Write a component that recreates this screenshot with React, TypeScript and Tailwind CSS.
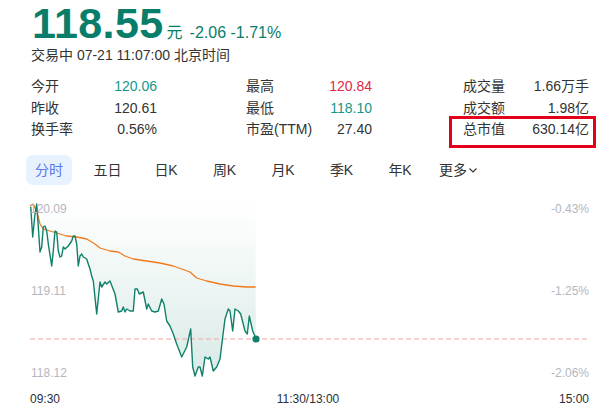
import React from 'react';

const FONT = '"Liberation Sans", Arial, "Noto Sans CJK SC", sans-serif';

const pricePts: [number, number][] = [
  [30.7, 207.7], [32.7, 238], [35, 215], [36.7, 205], [38.3, 228], [40, 253], [41.7, 248],
  [43.3, 228], [45, 227], [46.7, 232], [48.3, 245], [51.7, 267], [53.3, 252], [55, 232],
  [56.7, 233], [58.3, 252], [60, 258], [61.7, 257], [63.3, 248], [65, 250], [68.3, 247],
  [71.7, 242], [73.3, 237], [75, 237], [76.7, 245], [78.3, 267], [80, 257], [81.7, 255],
  [83.3, 258], [86.7, 260], [88.3, 265], [90, 270], [91.7, 277], [93.3, 282], [96.7, 315],
  [100, 283], [101.7, 288], [105, 283], [106.7, 285], [110, 282], [115, 295], [118.3, 313],
  [121.7, 312], [123.3, 308], [125, 313], [126.7, 310], [130, 312], [133.3, 312], [135, 290],
  [137.3, 290], [139.3, 295], [143.3, 293], [146.7, 310], [148.3, 305], [151.7, 312],
  [155, 313], [158.3, 312], [161.7, 300], [164, 305], [166.7, 322], [170, 327], [173.3, 335],
  [176.7, 345], [181.7, 358], [186.7, 348], [190.7, 330], [192.7, 368], [195, 377],
  [198.3, 368], [200, 368], [202.3, 377], [205, 358], [208.3, 360], [210, 358], [213.3, 372],
  [216.7, 368], [220, 360], [222.7, 338], [225, 320], [228.3, 310], [230, 312], [232.7, 332],
  [235, 310], [238.3, 312], [240.7, 315], [245, 332], [247.3, 335], [249.3, 317], [252.7, 332],
  [255.7, 339],
];

const avgPts: [number, number][] = [
  [30, 207], [33, 205], [36.7, 212], [40, 225], [43.3, 230], [53.3, 233], [66.7, 237],
  [76.7, 238], [86.7, 240], [95, 245], [100, 249], [110, 252], [118.3, 253], [125, 257],
  [133.3, 260], [146.7, 262], [160, 264], [173.3, 267], [181.7, 270], [190, 273], [196.7, 279],
  [206.7, 282], [220, 285], [233.3, 287], [246.7, 288], [255.7, 288],
];

const toPath = (pts: [number, number][]) =>
  pts.map(([x, y], i) => `${i ? 'L' : 'M'}${x} ${y}`).join(' ');

const stats = [
  [['今开', '120.06', 'text-[#16968a]'], ['最高', '120.84', 'text-[#e0284a]'], ['成交量', '1.66万手', 'text-[#333]']],
  [['昨收', '120.61', 'text-[#333]'], ['最低', '118.10', 'text-[#16968a]'], ['成交额', '1.98亿', 'text-[#333]']],
  [['换手率', '0.56%', 'text-[#333]'], ['市盈(TTM)', '27.40', 'text-[#333]'], ['总市值', '630.14亿', 'text-[#333]']],
];

const tabs = ['分时', '五日', '日K', '周K', '月K', '季K', '年K'];

function Chart() {
  const line = toPath(pricePts);
  const area = `${line} L255.7 203 L30.7 203 Z`;
  return (
    <div className="relative mt-[14px] h-[188px] w-full">
      <svg className="absolute inset-0" width="613" height="188" viewBox="0 200 613 188">
        <defs>
          <linearGradient id="fillG" x1="0" y1="203" x2="0" y2="378" gradientUnits="userSpaceOnUse">
            <stop offset="0" stopColor="#0f7d68" stopOpacity="0" />
            <stop offset="1" stopColor="#0f7d68" stopOpacity="0.16" />
          </linearGradient>
        </defs>
        <path d={area} fill="url(#fillG)" />
        <line x1="30" y1="340" x2="590" y2="340" stroke="#f3a4a4" strokeWidth="1.2" strokeDasharray="5 3" />
        <path d={toPath(avgPts)} fill="none" stroke="#f07a1e" strokeWidth="1.3" strokeLinejoin="round" />
        <path d={line} fill="none" stroke="#10806a" strokeWidth="1.4" strokeLinejoin="round" />
        <circle cx="256" cy="340" r="3.6" fill="#10806a" />
      </svg>
      {/* axis labels overlaid on the plot */}
      <div className="pointer-events-none absolute inset-0 flex justify-between pb-[7px] pl-[30px] pr-[24px] pt-[3px] text-[12px] leading-[14px] text-[#b4b7bf]">
        <div className="flex flex-col justify-between">
          <span>120.09</span>
          <span className="pl-[1px]">119.11</span>
          <span className="pl-[1px]">118.12</span>
        </div>
        <div className="flex flex-col items-end justify-between">
          <span>-0.43%</span>
          <span>-1.25%</span>
          <span>-2.06%</span>
        </div>
      </div>
    </div>
  );
}

export default function App() {
  return (
    <div className="h-[410px] w-[613px] overflow-hidden bg-white" style={{ fontFamily: FONT }}>
      <div className="px-[31px]">
        <div className="mt-[2px] flex items-baseline pl-[1px]">
          <span className="text-[43px] font-bold leading-none tracking-[0.4px] text-[#087d69]">118.55</span>
          <span className="ml-[3px] text-[16px] text-[#087d69]">元</span>
          <span className="ml-[7px] text-[16px] text-[#087d69]">-2.06 -1.71%</span>
        </div>
        <div className="text-[14px] leading-[20px] text-[#333]">交易中 07-21 11:07:00 北京时间</div>

        <div className="mt-[11px] text-[14px] leading-[21.5px]">
          {stats.map((row, ri) => (
            <div key={ri} className="grid grid-cols-[215px_217px_126px]">
              {row.map(([label, value, color], ci) => (
                <div key={ci} className="relative flex w-[126px] justify-between">
                  <span className="text-[#333]">{label}</span>
                  <span className={color}>{value}</span>
                  {ri === 2 && ci === 2 && (
                    <div className="absolute -left-[14px] -right-[7px] -top-[3px] -bottom-[7px] border-[3px] border-[#e3001b]" />
                  )}
                </div>
              ))}
            </div>
          ))}
        </div>
      </div>

      <div className="mt-[14.5px] flex pl-[19.8px] text-[14px] text-[#333]">
        {tabs.map((t, i) => (
          <div key={t} className="flex w-[58.5px] justify-center">
            <div
              className={
                i === 0
                  ? 'flex h-[30px] w-[46px] items-center justify-center rounded-[7px] bg-[#e8f1fe] text-[#5a78ea]'
                  : 'flex h-[30px] items-center justify-center'
              }
            >
              {t}
            </div>
          </div>
        ))}
        <div className="flex w-[58.5px] items-center justify-center">
          <span>更多</span>
          <svg width="10" height="10" viewBox="0 0 10 10" className="ml-[1px]">
            <path d="M1.5 3.5 L5 7 L8.5 3.5" fill="none" stroke="#333" strokeWidth="1.1" />
          </svg>
        </div>
      </div>

      <Chart />

      <div className="flex h-[24px] justify-between pl-[30px] pr-[24px] text-[12px] leading-[24px] text-[#2b2f38]">
        <span>09:30</span>
        <span className="pr-[3px]">11:30/13:00</span>
        <span>15:00</span>
      </div>
    </div>
  );
}
